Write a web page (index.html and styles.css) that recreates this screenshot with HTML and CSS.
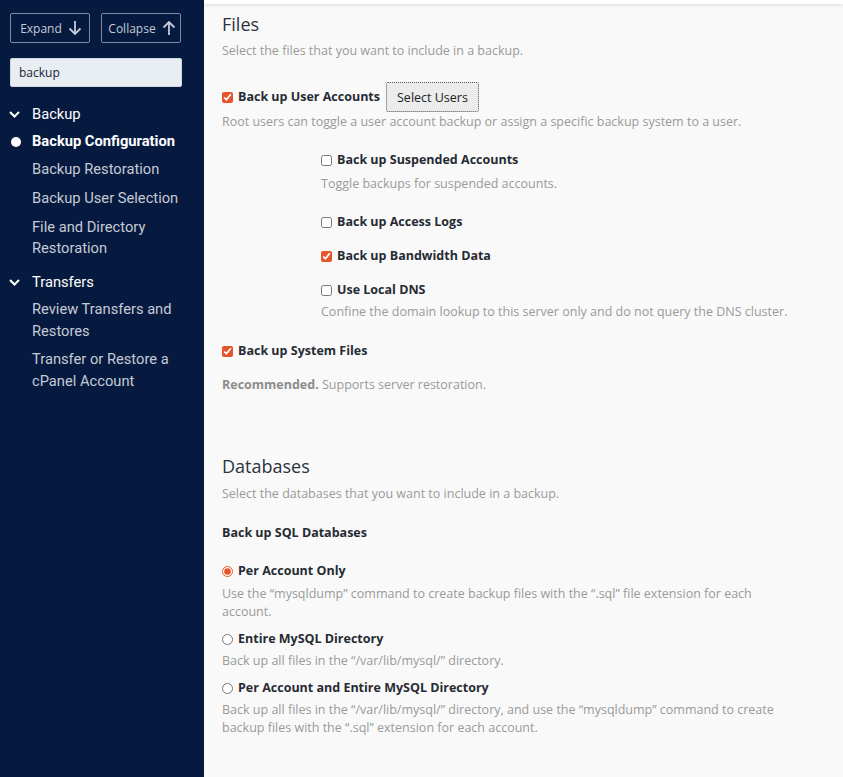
FILE: index.html
```html
<!DOCTYPE html>
<html>
<head>
<meta charset="utf-8">
<link rel="stylesheet" href="styles.css">
</head>
<body>
<div class="layout">
  <aside class="sidebar">
    <div class="tools">
      <button class="tool-btn">Expand
        <svg width="14" height="16" viewBox="0 0 14 16"><path d="M7 1v13M1.5 8.5L7 14l5.5-5.5" fill="none" stroke="currentColor" stroke-width="1.8"/></svg>
      </button>
      <button class="tool-btn">Collapse
        <svg width="14" height="16" viewBox="0 0 14 16"><path d="M7 15V2M1.5 7.5L7 2l5.5 5.5" fill="none" stroke="currentColor" stroke-width="1.8"/></svg>
      </button>
    </div>
    <input class="search" type="text" value="backup">
    <nav class="nav">
      <div class="group">
        <svg class="chev" width="11" height="7" viewBox="0 0 11 7"><path d="M1 1l4.5 4.5L10 1" fill="none" stroke="currentColor" stroke-width="2"/></svg>
        <span>Backup</span>
      </div>
      <div class="item active"><span class="dot"></span>Backup Configuration</div>
      <div class="item">Backup Restoration</div>
      <div class="item">Backup User Selection</div>
      <div class="item last">File and Directory Restoration</div>
      <div class="group g2">
        <svg class="chev" width="11" height="7" viewBox="0 0 11 7"><path d="M1 1l4.5 4.5L10 1" fill="none" stroke="currentColor" stroke-width="2"/></svg>
        <span>Transfers</span>
      </div>
      <div class="item tall">Review Transfers and Restores</div>
      <div class="item tall">Transfer or Restore a cPanel Account</div>
    </nav>
  </aside>
  <main class="main">
    <div class="topbar"></div>
    <div class="content">
      <section class="files">
        <h2>Files</h2>
        <p class="desc">Select the files that you want to include in a backup.</p>

        <div class="opt opt-users">
          <label class="check"><input type="checkbox" checked> Back up User Accounts</label>
          <button class="select-btn">Select Users</button>
        </div>
        <p class="desc">Root users can toggle a user account backup or assign a specific backup system to a user.</p>

        <div class="nested">
          <label class="check"><input type="checkbox"> Back up Suspended Accounts</label>
          <p class="desc">Toggle backups for suspended accounts.</p>
          <label class="check sp"><input type="checkbox"> Back up Access Logs</label>
          <label class="check sp"><input type="checkbox" checked> Back up Bandwidth Data</label>
          <label class="check sp"><input type="checkbox"> Use Local DNS</label>
          <p class="desc dns">Confine the domain lookup to this server only and do not query the DNS cluster.</p>
        </div>

        <label class="check sys"><input type="checkbox" checked> Back up System Files</label>
        <p class="desc rec"><b>Recommended.</b> Supports server restoration.</p>
      </section>

      <section class="dbs">
        <h2>Databases</h2>
        <p class="desc">Select the databases that you want to include in a backup.</p>
        <div class="subhead">Back up SQL Databases</div>

        <label class="check radio first"><input type="radio" name="db" checked> Per Account Only</label>
        <p class="desc">Use the “mysqldump” command to create backup files with the “.sql” file extension for each account.</p>
        <label class="check radio"><input type="radio" name="db"> Entire MySQL Directory</label>
        <p class="desc d2">Back up all files in the “/var/lib/mysql/” directory.</p>
        <label class="check radio"><input type="radio" name="db"> Per Account and Entire MySQL Directory</label>
        <p class="desc d2">Back up all files in the “/var/lib/mysql/” directory, and use the “mysqldump” command to create backup files with the “.sql” extension for each account.</p>
      </section>
    </div>
  </main>
</div>
</body>
</html>
```
FILE: styles.css
```css
* { box-sizing: border-box; }
html, body { margin: 0; padding: 0; height: 100%; }
body { font-family: "Open Sans", sans-serif; background: #f9f9f9; }

.layout { display: flex; min-height: 777px; }

.sidebar {
  width: 204px;
  flex: 0 0 204px;
  background: #061a3f;
  color: #c5cad6;
  font-family: Roboto, sans-serif;
  padding: 13px 0 0 0;
}
.tools { display: flex; gap: 11px; padding: 0 0 0 10px; }
.tool-btn {
  width: 80px; height: 30px;
  background: transparent;
  border: 1px solid #7f8aa1;
  border-radius: 2px;
  color: #c5cad6;
  font-family: "Open Sans", sans-serif;
  font-size: 12px;
  display: flex; align-items: center; justify-content: center; gap: 6px;
  padding: 0 0 0 2px;
}
.tool-btn svg { color: #c5cad6; }
.search {
  display: block;
  margin: 15px 0 0 10px;
  width: 172px; height: 29px;
  background: #e8ecf3;
  border: 1px solid #d0d6e0;
  border-radius: 2px;
  padding: 0 8px;
  font-family: "Open Sans", sans-serif;
  font-size: 12px;
  color: #1d2333;
}
.nav { margin-top: 16px; font-size: 14.7px; }
.group {
  display: flex; align-items: center;
  height: 22px;
  color: #ffffff;
  padding-left: 9px;
  margin-bottom: 6px;
}
.group.g2 { margin-top: 1px; margin-bottom: 5px; }
.group .chev { color: #fff; margin-right: 12px; }
.item {
  position: relative;
  padding: 0 10px 0 32px;
  line-height: 21px;
  margin-bottom: 8px;
  color: #c5cad6;
}
.item.active { color: #fff; font-weight: 700; margin-bottom: 7px; }
.item.last { margin-bottom: 12px; }
.item.tall { line-height: 22px; margin-bottom: 6px; }
.dot {
  position: absolute; left: 11px; top: 5.5px;
  width: 10px; height: 10px; border-radius: 50%;
  background: #fff;
}

.main { flex: 1; position: relative; }
.topbar {
  height: 4px;
  background: #fff;
  box-shadow: 0 1px 4px rgba(0,0,0,0.12);
}
.content { padding: 8px 0 0 18px; max-width: 597px; }
h2 {
  margin: 0;
  font-size: 18px; font-weight: 400;
  color: #2b3340;
  line-height: 24px;
}
.desc {
  margin: 6px 0 0 0;
  font-size: 12.5px;
  line-height: 18px;
  color: #9a9a9a;
}
.check {
  display: flex; align-items: center;
  font-size: 12.5px; font-weight: 700;
  color: #262b33;
  line-height: 18px;
}
.check input {
  margin: 0 5px 0 0;
  width: 11px; height: 11px;
  accent-color: #e8542a;
}
.opt-users { display: flex; align-items: center; margin-top: 22px; }
.select-btn {
  margin-left: 6px;
  height: 30px;
  padding: 0 10px;
  background: #ececec;
  border: 1px dotted #555;
  border-radius: 2px;
  font-family: "Open Sans", sans-serif;
  font-size: 12.5px;
  color: #222;
}
.opt-users + .desc { margin-top: 1px; }
.nested { margin-left: 99px; margin-top: 20px; }
.nested .desc { margin-top: 6px; }
.nested .desc.dns { margin-top: 4px; }
.check.sp { margin-top: 16px; }
.nested .desc + .check.sp { margin-top: 20px; }
.sys { margin-top: 21px; }
.rec { margin-top: 16px; }
.rec b { color: #8c8c8c; }

.dbs { margin-top: 60px; }
.dbs h2 + .desc { margin-top: 7px; }
.subhead {
  margin-top: 21px;
  font-size: 12.5px; font-weight: 700; color: #262b33; line-height: 18px;
}
.radio { margin-top: 9px; }
.radio.first { margin-top: 20px; }
.radio + .desc { margin-top: 5px; }
.radio + .desc.d2 { margin-top: 4px; }
```
